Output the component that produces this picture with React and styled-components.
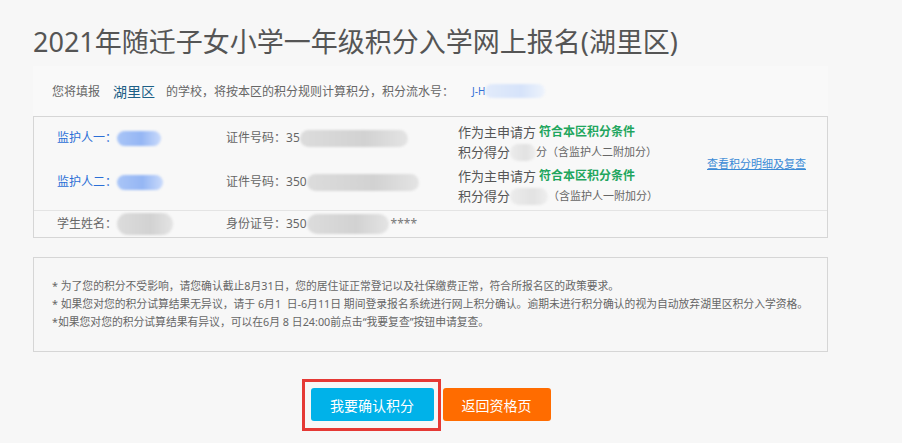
import React from 'react';
import styled, { createGlobalStyle } from 'styled-components';

const GlobalStyle = createGlobalStyle`
  body {
    margin: 0;
    background: #f7f7f7;
    font-family: "Noto Sans", "Noto Sans CJK SC", sans-serif;
    color: #666;
  }
`;

const guardians = [
  { label: '监护人一：', id: '35', nameW: 44, idW: 108, scoreW: 26, note: '分（含监护人二附加分）' },
  { label: '监护人二：', id: '350', nameW: 46, idW: 112, scoreW: 38, note: '（含监护人一附加分）' },
];

const App = () => {
  return (
    <Page>
      <GlobalStyle />
      <Title>2021年随迁子女小学一年级积分入学网上报名(湖里区)</Title>

      <InfoBar>
        您将填报
        <District>湖里区</District>
        的学校，将按本区的积分规则计算积分，积分流水号：
        <Serial>J-H</Serial>
        <Blob $w={60} $h={14} $tone="lightblue" />
      </InfoBar>

      <Table>
        <GuardianSection>
          <Rows>
            {guardians.map((g) => (
              <GuardianRow key={g.label}>
                <Label $blue $offset>
                  {g.label}
                  <Blob $w={g.nameW} $h={15} $tone="blue" />
                </Label>
                <Label $offset>
                  证件号码：{g.id}
                  <Blob $w={g.idW} $h={17} $tone="grey" />
                </Label>
                <ScoreCell>
                  <div>
                    作为主申请方 <Qualified>符合本区积分条件</Qualified>
                  </div>
                  <div>
                    积分得分
                    <Blob $w={g.scoreW} $h={17} $tone="lightgrey" />
                    <Small>{g.note}</Small>
                  </div>
                </ScoreCell>
              </GuardianRow>
            ))}
          </Rows>
          <LinkCell>
            <DetailLink href="#">查看积分明细及复查</DetailLink>
          </LinkCell>
        </GuardianSection>
        <StudentRow>
          <Label>
            学生姓名：
            <Blob $w={56} $h={22} $tone="grey" />
          </Label>
          <Label>
            身份证号：350
            <Blob $w={82} $h={20} $tone="grey" />
            <Faint>****</Faint>
          </Label>
        </StudentRow>
      </Table>

      <Notes>
        <div>* 为了您的积分不受影响，请您确认截止8月31日，您的居住证正常登记以及社保缴费正常，符合所报名区的政策要求。</div>
        <div>* 如果您对您的积分试算结果无异议，请于 6月1&nbsp; 日-6月11日 期间登录报名系统进行网上积分确认。逾期未进行积分确认的视为自动放弃湖里区积分入学资格。</div>
        <div>*如果您对您的积分试算结果有异议，可以在6月 8 日24:00前点击“我要复查”按钮申请复查。</div>
      </Notes>

      <Actions>
        <Highlighted>
          <Button $color="#00b2e9">我要确认积分</Button>
        </Highlighted>
        <Button $color="#ff6c00" $w={108}>返回资格页</Button>
      </Actions>
    </Page>
  );
};

export default App;

const Page = styled.div`
  width: 795px;
  padding: 22px 0 30px 33px;
`;

const Title = styled.h1`
  margin: 0;
  font-size: 27px;
  font-weight: normal;
  line-height: 40px;
  color: #555;
  white-space: nowrap;
`;

const InfoBar = styled.div`
  margin-top: 4px;
  height: 50px;
  display: flex;
  align-items: center;
  padding-left: 19px;
  background: #f9f9f9;
  font-size: 12px;
  color: #666;
  white-space: nowrap;
`;

const District = styled.span`
  margin: 0 11px 0 13px;
  font-size: 14px;
  color: #1d5f86;
`;

const Serial = styled.span`
  margin-left: 18px;
  font-size: 10px;
  color: #2d6fd6;
`;

const Blob = styled.span`
  display: inline-block;
  vertical-align: middle;
  width: ${(p) => p.$w}px;
  height: ${(p) => p.$h}px;
  border-radius: ${(p) => p.$h / 2}px;
  filter: blur(1px);
  background: ${(p) =>
    p.$tone === 'blue'
      ? 'linear-gradient(90deg, #a9c5f7, #95b6f4 55%, #c9dafb)'
      : p.$tone === 'lightblue'
      ? 'linear-gradient(90deg, #e2ebfb, #d6e3fa 60%, #eef3fc)'
      : p.$tone === 'lightgrey'
      ? 'linear-gradient(90deg, #ececec, #e2e2e2 60%, #eeeeee)'
      : 'linear-gradient(90deg, #dcdcdc, #d2d2d2 60%, #e4e4e4)'};
`;

const Table = styled.div`
  border: 1px solid #d6d6d6;
  background: #f8f8f8;
`;

const GuardianSection = styled.div`
  display: flex;
  padding-top: 5px;
  border-bottom: 1px solid #e4e4e4;
`;

const Rows = styled.div`
  width: 673px;
`;

const GuardianRow = styled.div`
  display: grid;
  grid-template-columns: 169px 232px 1fr;
  align-items: start;
  height: 44px;
  padding-left: 23px;
`;

const Label = styled.div`
  margin-top: ${(p) => (p.$offset ? '7px' : '0')};
  font-size: 12px;
  line-height: 18px;
  color: ${(p) => (p.$blue ? '#2b6fd6' : '#666')};
  white-space: nowrap;
  display: flex;
  align-items: center;
`;

const ScoreCell = styled.div`
  font-size: 13px;
  line-height: 20px;
  color: #555;
  white-space: nowrap;

  & > div {
    display: flex;
    align-items: center;
  }
`;

const Qualified = styled.span`
  margin-left: 3px;
  font-size: 12px;
  font-weight: bold;
  color: #1fa65e;
`;

const Small = styled.span`
  font-size: 11px;
  color: #666;
`;

const LinkCell = styled.div`
  flex: 1;
  display: flex;
  align-items: center;
  padding-bottom: 6px;
`;

const DetailLink = styled.a`
  font-size: 11px;
  color: #3a8ad6;
  text-decoration: underline;
  white-space: nowrap;
`;

const StudentRow = styled.div`
  display: grid;
  grid-template-columns: 169px 1fr;
  align-items: center;
  height: 26px;
  padding-left: 23px;
`;

const Faint = styled.span`
  margin-left: 2px;
  color: #777;
`;

const Notes = styled.div`
  margin-top: 19px;
  border: 1px solid #d6d6d6;
  padding: 19px 18px 20px;
  font-size: 10.8px;
  line-height: 18px;
  color: #666;
  white-space: nowrap;
`;

const Actions = styled.div`
  margin-top: 36px;
  display: flex;
  justify-content: center;
  gap: 9px;
`;

const Highlighted = styled.div`
  position: relative;
  display: flex;

  &::after {
    content: '';
    position: absolute;
    top: -9px;
    left: -9px;
    right: -7px;
    bottom: -10px;
    border: 3px solid #e53935;
    pointer-events: none;
  }
`;

const Button = styled.button`
  width: ${(p) => p.$w || 123}px;
  height: 33px;
  border: none;
  border-radius: 3px;
  background: ${(p) => p.$color};
  color: #fff;
  font-family: inherit;
  font-size: 14px;
  cursor: pointer;
`;
